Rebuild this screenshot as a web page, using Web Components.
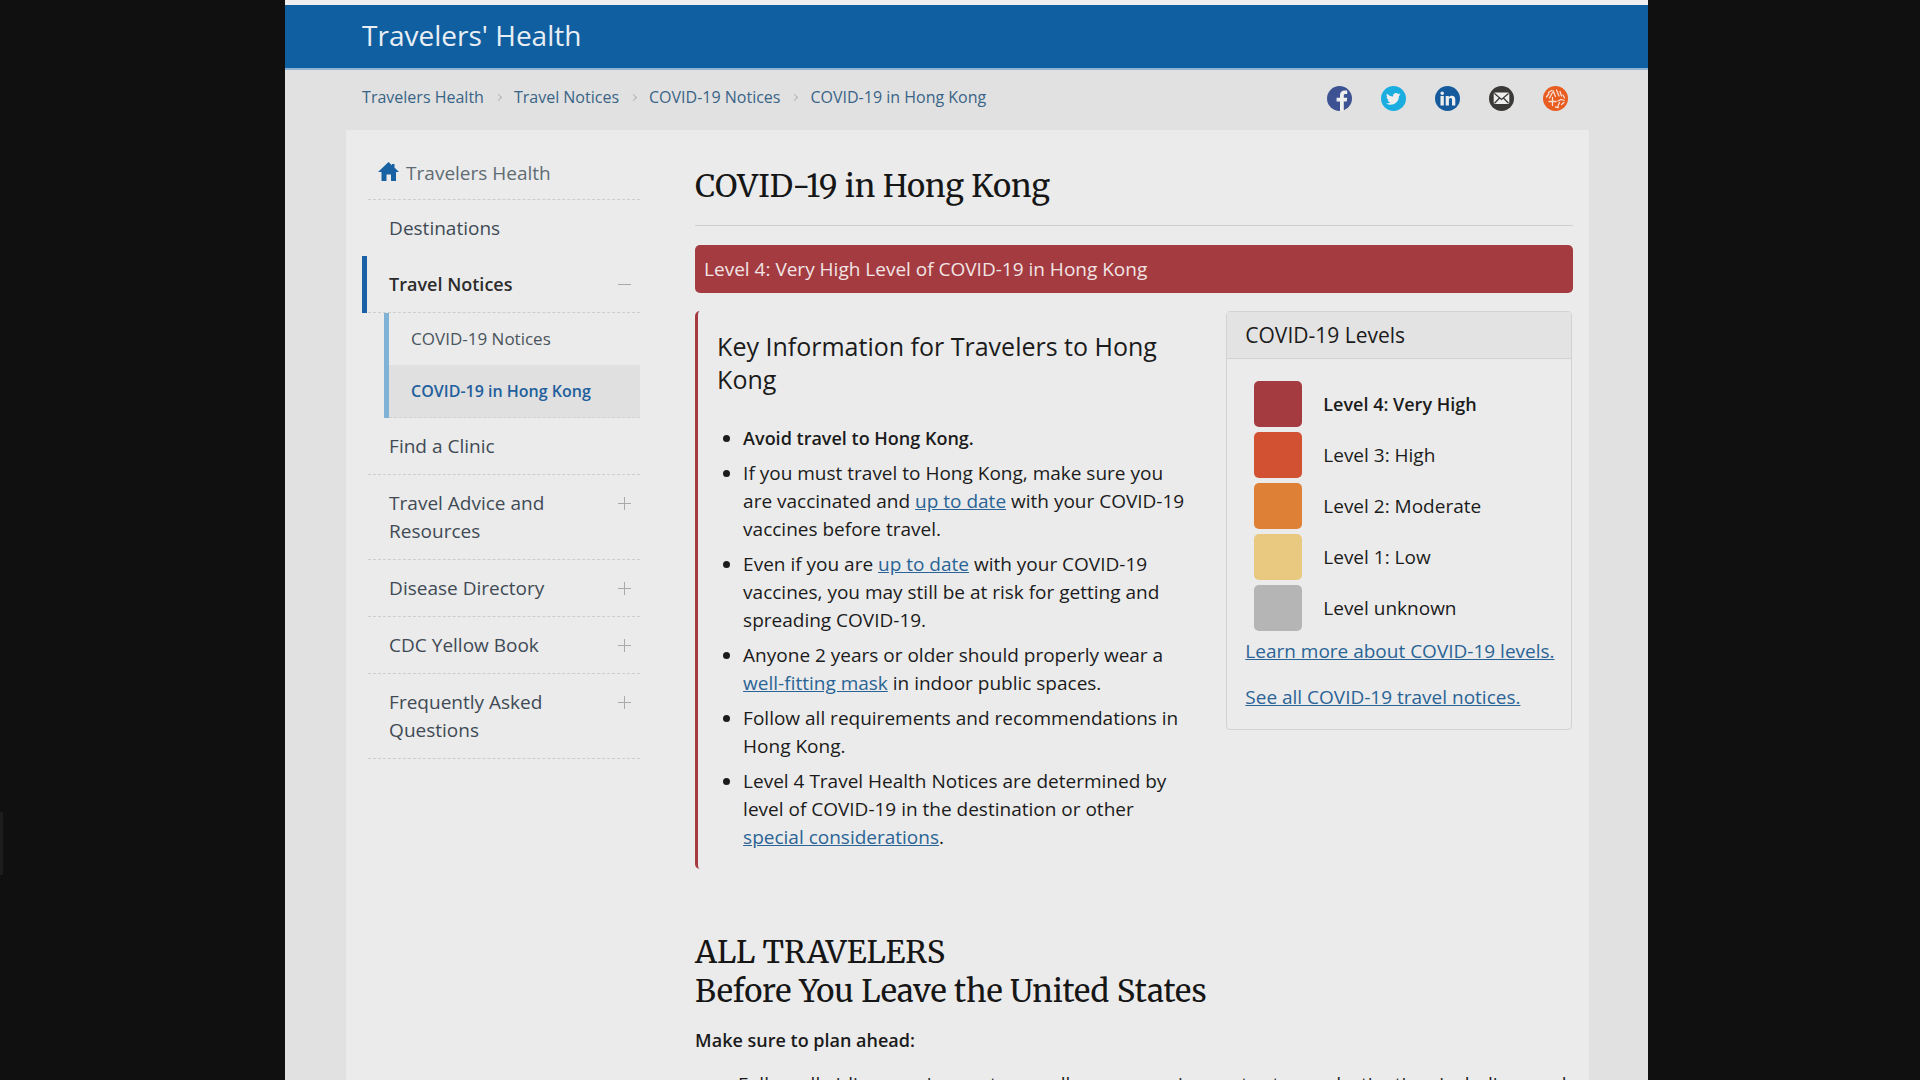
<!DOCTYPE html>
<html lang="en">
<head>
<meta charset="utf-8">
<title>COVID-19 in Hong Kong - Travelers' Health</title>
<style>
html { background: #101010; scrollbar-width: none; }
body { margin: 0; font-family: "Open Sans", "Noto Sans", sans-serif; font-size: 19px; line-height: 28px; color: #1b1b1b; --serif: Merriweather, "Noto Serif", "Liberation Serif", serif; --link: #2a6496; --red: #a33b41; }
</style>
</head>
<body>
<th-page>
  <th-header slot="header">Travelers' Health</th-header>
  <th-breadcrumbs slot="tools">
    <th-crumb>Travelers Health</th-crumb>
    <th-crumb>Travel Notices</th-crumb>
    <th-crumb>COVID-19 Notices</th-crumb>
    <th-crumb>COVID-19 in Hong Kong</th-crumb>
  </th-breadcrumbs>
  <th-share slot="tools"></th-share>
  <th-sidenav slot="nav">
    <th-nav-item kind="home">Travelers Health</th-nav-item>
    <th-nav-item kind="plain">Destinations</th-nav-item>
    <th-nav-item kind="open">Travel Notices</th-nav-item>
    <th-subnav>
      <th-subnav-item>COVID-19 Notices</th-subnav-item>
      <th-subnav-item current>COVID-19 in Hong Kong</th-subnav-item>
    </th-subnav>
    <th-nav-item>Find a Clinic</th-nav-item>
    <th-nav-item kind="closed">Travel Advice and Resources</th-nav-item>
    <th-nav-item kind="closed">Disease Directory</th-nav-item>
    <th-nav-item kind="closed">CDC Yellow Book</th-nav-item>
    <th-nav-item kind="closed">Frequently Asked Questions</th-nav-item>
  </th-sidenav>
  <th-notice></th-notice>
</th-page>

<script>
function define(name, html, setup) {
  const template = document.createElement('template');
  template.innerHTML = html;
  customElements.define(name, class extends HTMLElement {
    connectedCallback() {
      if (this.shadowRoot) return;
      this.attachShadow({ mode: 'open' }).append(template.content.cloneNode(true));
      if (setup) setup(this, this.shadowRoot);
    }
  });
}

define('th-page', `
<style>
:host { display: block; width: 71%; margin: 0 auto 0 14.85%; background: #e1e1e1; }
:host::before { content: ""; position: fixed; left: 0; top: 812px; width: 3px; height: 63px; background: #1d1d1d; }
.tools { display: flex; justify-content: space-between; align-items: center; height: 60px; padding: 0 80px 0 77px; }
.panel { display: flex; gap: 55px; margin: 0 59px 0 61px; padding: 16px 16px 0 16px; background: #ebebeb; }
main { flex: 1; min-width: 0; }
</style>
<slot name="header"></slot>
<div class="tools"><slot name="tools"></slot></div>
<div class="panel"><slot name="nav"></slot><main><slot></slot></main></div>`);

define('th-header', `
<style>
:host { display: block; border-top: 5px solid #efefef; background: #1060a1; border-bottom: 2px solid #8fb4d3; }
a { display: block; padding: 11px 77px 14px; font-size: 28px; line-height: 38px; color: #e9eef4; text-decoration: none; }
</style>
<a href="#"><slot></slot></a>`);

define('th-breadcrumbs', `
<style>
:host { display: block; }
nav { display: flex; padding-bottom: 6px; }
</style>
<nav aria-label="Breadcrumb"><slot></slot></nav>`);

define('th-crumb', `
<style>
:host { display: flex; align-items: center; font-size: 16px; line-height: 24px; }
:host(:not(:first-child))::before { content: ""; width: 4px; height: 4px; border: solid #b4b4b4; border-width: 1px 1px 0 0; transform: rotate(45deg); margin: 0 13px 0 12px; }
a { color: #3a6487; text-decoration: none; }
</style>
<a href="#"><slot></slot></a>`);

define('th-share', `
<style>
:host { display: flex; gap: 29px; padding-bottom: 3px; }
a { display: block; width: 25px; height: 25px; }
svg { display: block; width: 100%; height: 100%; }
</style>
<a href="#" aria-label="Facebook"><svg viewBox="0 0 25 25"><circle cx="12.5" cy="12.5" r="12.5" fill="#3d5293"/><path d="M13 25v-9.600h-3.400v-3.600H13V9.200C13 6 14.900 4.500 17.600 4.500h2.600v3.500h-1.700c-1.300 0-1.700.7-1.700 1.700v2.100h3.400l-.5 3.600h-2.900V25z" fill="#eee"/></svg></a>
<a href="#" aria-label="Twitter"><svg viewBox="0 0 25 25"><circle cx="12.500" cy="12.500" r="12.500" fill="#1aaee0"/><path d="M19.500 8.300c-.5.300-1.100.4-1.700.5.600-.4 1-.9 1.300-1.600-.6.300-1.200.6-1.900.7a3 3 0 0 0-5.100 2.700c-2.500-.1-4.700-1.300-6.100-3.100-.9 1.500-.3 3.200.9 4-.5 0-.9-.1-1.300-.4 0 1.500 1 2.700 2.400 3-.4.100-.9.100-1.300.1.400 1.200 1.500 2 2.700 2a6 6 0 0 1-4.400 1.300c4.700 2.900 12.900.7 13-7.500.6-.5 1.100-1 1.500-1.700z" fill="#eee"/></svg></a>
<a href="#" aria-label="LinkedIn"><svg viewBox="0 0 25 25"><circle cx="12.500" cy="12.500" r="12.500" fill="#145a9c"/><path d="M5.500 10h3.300v9.500H5.500zM7.200 5.500a1.800 1.800 0 1 1 0 3.600 1.800 1.800 0 0 1 0-3.600zM10.700 10h3.100v1.300c.5-.9 1.600-1.600 3-1.600 2.800 0 3.500 1.800 3.500 4.300v5.500H17v-5c0-1.200 0-2.400-1.500-2.400s-1.600 1.100-1.600 2.300v5.100h-3.200z" fill="#eee"/></svg></a>
<a href="#" aria-label="Email"><svg viewBox="0 0 25 25"><circle cx="12.500" cy="12.500" r="12.500" fill="#3a3938"/><rect x="4.700" y="6.500" width="15.600" height="11.500" rx="1.500" fill="#eee"/><path d="M5.500 7.500l7 6 7-6M5.500 17.300l4.800-5M19.500 17.300l-4.800-5" fill="none" stroke="#3a3938" stroke-width="1.300"/></svg></a>
<a href="#" aria-label="Syndicate"><svg viewBox="0 0 25 25"><circle cx="12.500" cy="12.500" r="12.500" fill="#e85c20"/><g fill="none" stroke="#f6dfd3" stroke-width="1.300" stroke-linecap="round"><path d="M9.500 11.500v8M6 15.500h7M3.500 11l2.500-3.500M6.500 12l3-5.500M10 4.500l2.500 6M13.500 4l2.500 6M17 5.500l1.500 4.500M5.500 6.500l3-2M15 15l3-1.500 3 1M15 20l1.500-3.500M18.500 18.500l2.500-2M20 9l1.500 3M12.500 21l3 .5"/></g></svg></a>`);

define('th-sidenav', `
<style>
:host { display: block; flex: 0 0 278px; }
</style>
<nav aria-label="Travelers Health"><slot></slot></nav>`);

define('th-nav-item', `
<style>
:host { display: block; border-left: 5px solid transparent; }
.row { display: flex; align-items: flex-start; margin-left: 1px; padding: 14px 9px 14px 21px; border-bottom: 1px dashed #cdcdcd; }
a { flex: 1; min-width: 0; padding-right: 60px; color: #3f4a55; text-decoration: none; }
svg { display: none; flex: none; width: 21px; height: 19px; margin: 3px 7px 0 0; }
button { display: none; flex: none; width: 14px; height: 28px; padding: 0; border: 0; background: linear-gradient(#a9a9a9, #a9a9a9) center / 13px 1px no-repeat; }
:host([kind=home]) .row { padding: 13px 9px 12px 10px; }
:host([kind=home]) svg { display: block; }
:host([kind=home]) a { color: #5f6b73; }
:host([kind=plain]) .row { border-bottom: 0; }
:host([kind=open]) { border-left-color: #1a62a5; }
:host([kind=open]) a { font-size: 18px; font-weight: 600; color: #2c2c2c; padding-right: 0; }
:host([kind=open]) button, :host([kind=closed]) button { display: block; }
:host([kind=closed]) button { background: linear-gradient(#a9a9a9, #a9a9a9) center / 13px 1px no-repeat, linear-gradient(#a9a9a9, #a9a9a9) center / 1px 13px no-repeat; }
</style>
<div class="row"><svg viewBox="0 0 21 19"><path d="M10.500 0 14 3.200V2h2.500v3.500L21 10h-3v9h-5v-6.500H8.500V19h-5v-9H0z" fill="#1862a4"/></svg><a href="#"><slot></slot></a><button type="button" aria-label="Toggle section"></button></div>`);

define('th-subnav', `
<style>
:host { display: block; margin-left: 22px; border-left: 5px solid #80b2d6; }
</style>
<slot></slot>`);

define('th-subnav-item', `
<style>
:host { display: block; font-size: 17px; }
a { display: block; padding: 12px 22px; color: #4a545c; text-decoration: none; }
:host([current]) { font-size: 16px; background: #e0e0e0; border-bottom: 1px dashed #d2d2d2; }
:host([current]) a { color: #225f9c; font-weight: 600; }
</style>
<a href="#"><slot></slot></a>`);

define('th-banner', `
<style>
:host { display: block; padding: 10px 9px; border-radius: 5px; background: var(--red); color: #f2e4e4; }
</style>
<slot></slot>`);

define('th-key-info', `
<style>
:host { display: block; flex: 1; min-width: 0; padding: 19px 36px 18px 19px; border-left: 3px solid var(--red); border-radius: 5px; }
h2 { margin: 0 0 28px; font-size: 25px; font-weight: 400; line-height: 33px; }
ul { margin: 0; padding: 0 0 0 26px; display: flex; flex-direction: column; gap: 7px; }
a { color: var(--link); }
b { font-size: 18px; font-weight: 600; }
</style>
<h2>Key Information for Travelers to Hong Kong</h2>
<ul>
<li><b>Avoid travel to Hong Kong.</b></li>
<li>If you must travel to Hong Kong, make sure you are vaccinated and <a href="#">up to date</a> with your COVID-19 vaccines before travel.</li>
<li>Even if you are <a href="#">up to date</a> with your COVID-19 vaccines, you may still be at risk for getting and spreading COVID-19.</li>
<li>Anyone 2 years or older should properly wear a <a href="#">well-fitting mask</a> in indoor public spaces.</li>
<li>Follow all requirements and recommendations in Hong Kong.</li>
<li>Level 4 Travel Health Notices are determined by level of COVID-19 in the destination or other <a href="#">special considerations</a>.</li>
</ul>`);

define('th-level', `
<style>
:host { display: flex; align-items: center; gap: 21px; }
i { width: 48px; height: 46px; border-radius: 5px; background: var(--swatch); }
:host([current]) { font-size: 18px; font-weight: 600; }
</style>
<i></i><span><slot></slot></span>`, (el, root) => root.querySelector('i').style.setProperty('--swatch', el.getAttribute('color')));

define('th-levels', `
<style>
:host { display: block; flex: 0 0 346px; box-sizing: border-box; border: 1px solid #d2d2d2; border-radius: 4px; }
h3 { margin: 0; padding: 9px 18px; font-size: 21px; font-weight: 400; line-height: 28px; background: #e3e3e3; border-bottom: 1px solid #d2d2d2; }
.body { padding: 22px 8px 18px 18px; }
.list { display: flex; flex-direction: column; gap: 5px; padding-left: 9px; }
p { margin: 18px 0 0; }
.list + p { margin-top: 6px; }
a { color: var(--link); }
</style>
<h3>COVID-19 Levels</h3>
<div class="body">
<div class="list">
<th-level current color="#a33b41">Level 4: Very High</th-level>
<th-level color="#d25132">Level 3: High</th-level>
<th-level color="#de8136">Level 2: Moderate</th-level>
<th-level color="#e9c880">Level 1: Low</th-level>
<th-level color="#b5b5b5">Level unknown</th-level>
</div>
<p><a href="#">Learn more about COVID-19 levels.</a></p>
<p><a href="#">See all COVID-19 travel notices.</a></p>
</div>`);

define('th-notice', `
<style>
:host { display: block; }
h1, h2 { margin: 0; font-family: var(--serif); font-size: 31px; font-weight: 400; line-height: 39px; color: #161616; }
h1 { padding: 20px 0; border-bottom: 1px solid #cfcfcf; margin-bottom: 19px; }
.columns { display: flex; align-items: flex-start; margin: 18px 1px 63px 0; }
h3 { margin: 16px 0; font-size: 18px; font-weight: 600; }
ul { margin: 0; padding: 0 0 0 43px; }
</style>
<h1>COVID-19 in Hong Kong</h1>
<th-banner>Level 4: Very High Level of COVID-19 in Hong Kong</th-banner>
<div class="columns"><th-key-info></th-key-info><th-levels></th-levels></div>
<h2>ALL TRAVELERS</h2>
<h2>Before You Leave the United States</h2>
<h3>Make sure to plan ahead:</h3>
<ul><li>Follow all airline requirements as well as any requirements at your destination, including mask</li></ul>`);
</script>
</body>
</html>
